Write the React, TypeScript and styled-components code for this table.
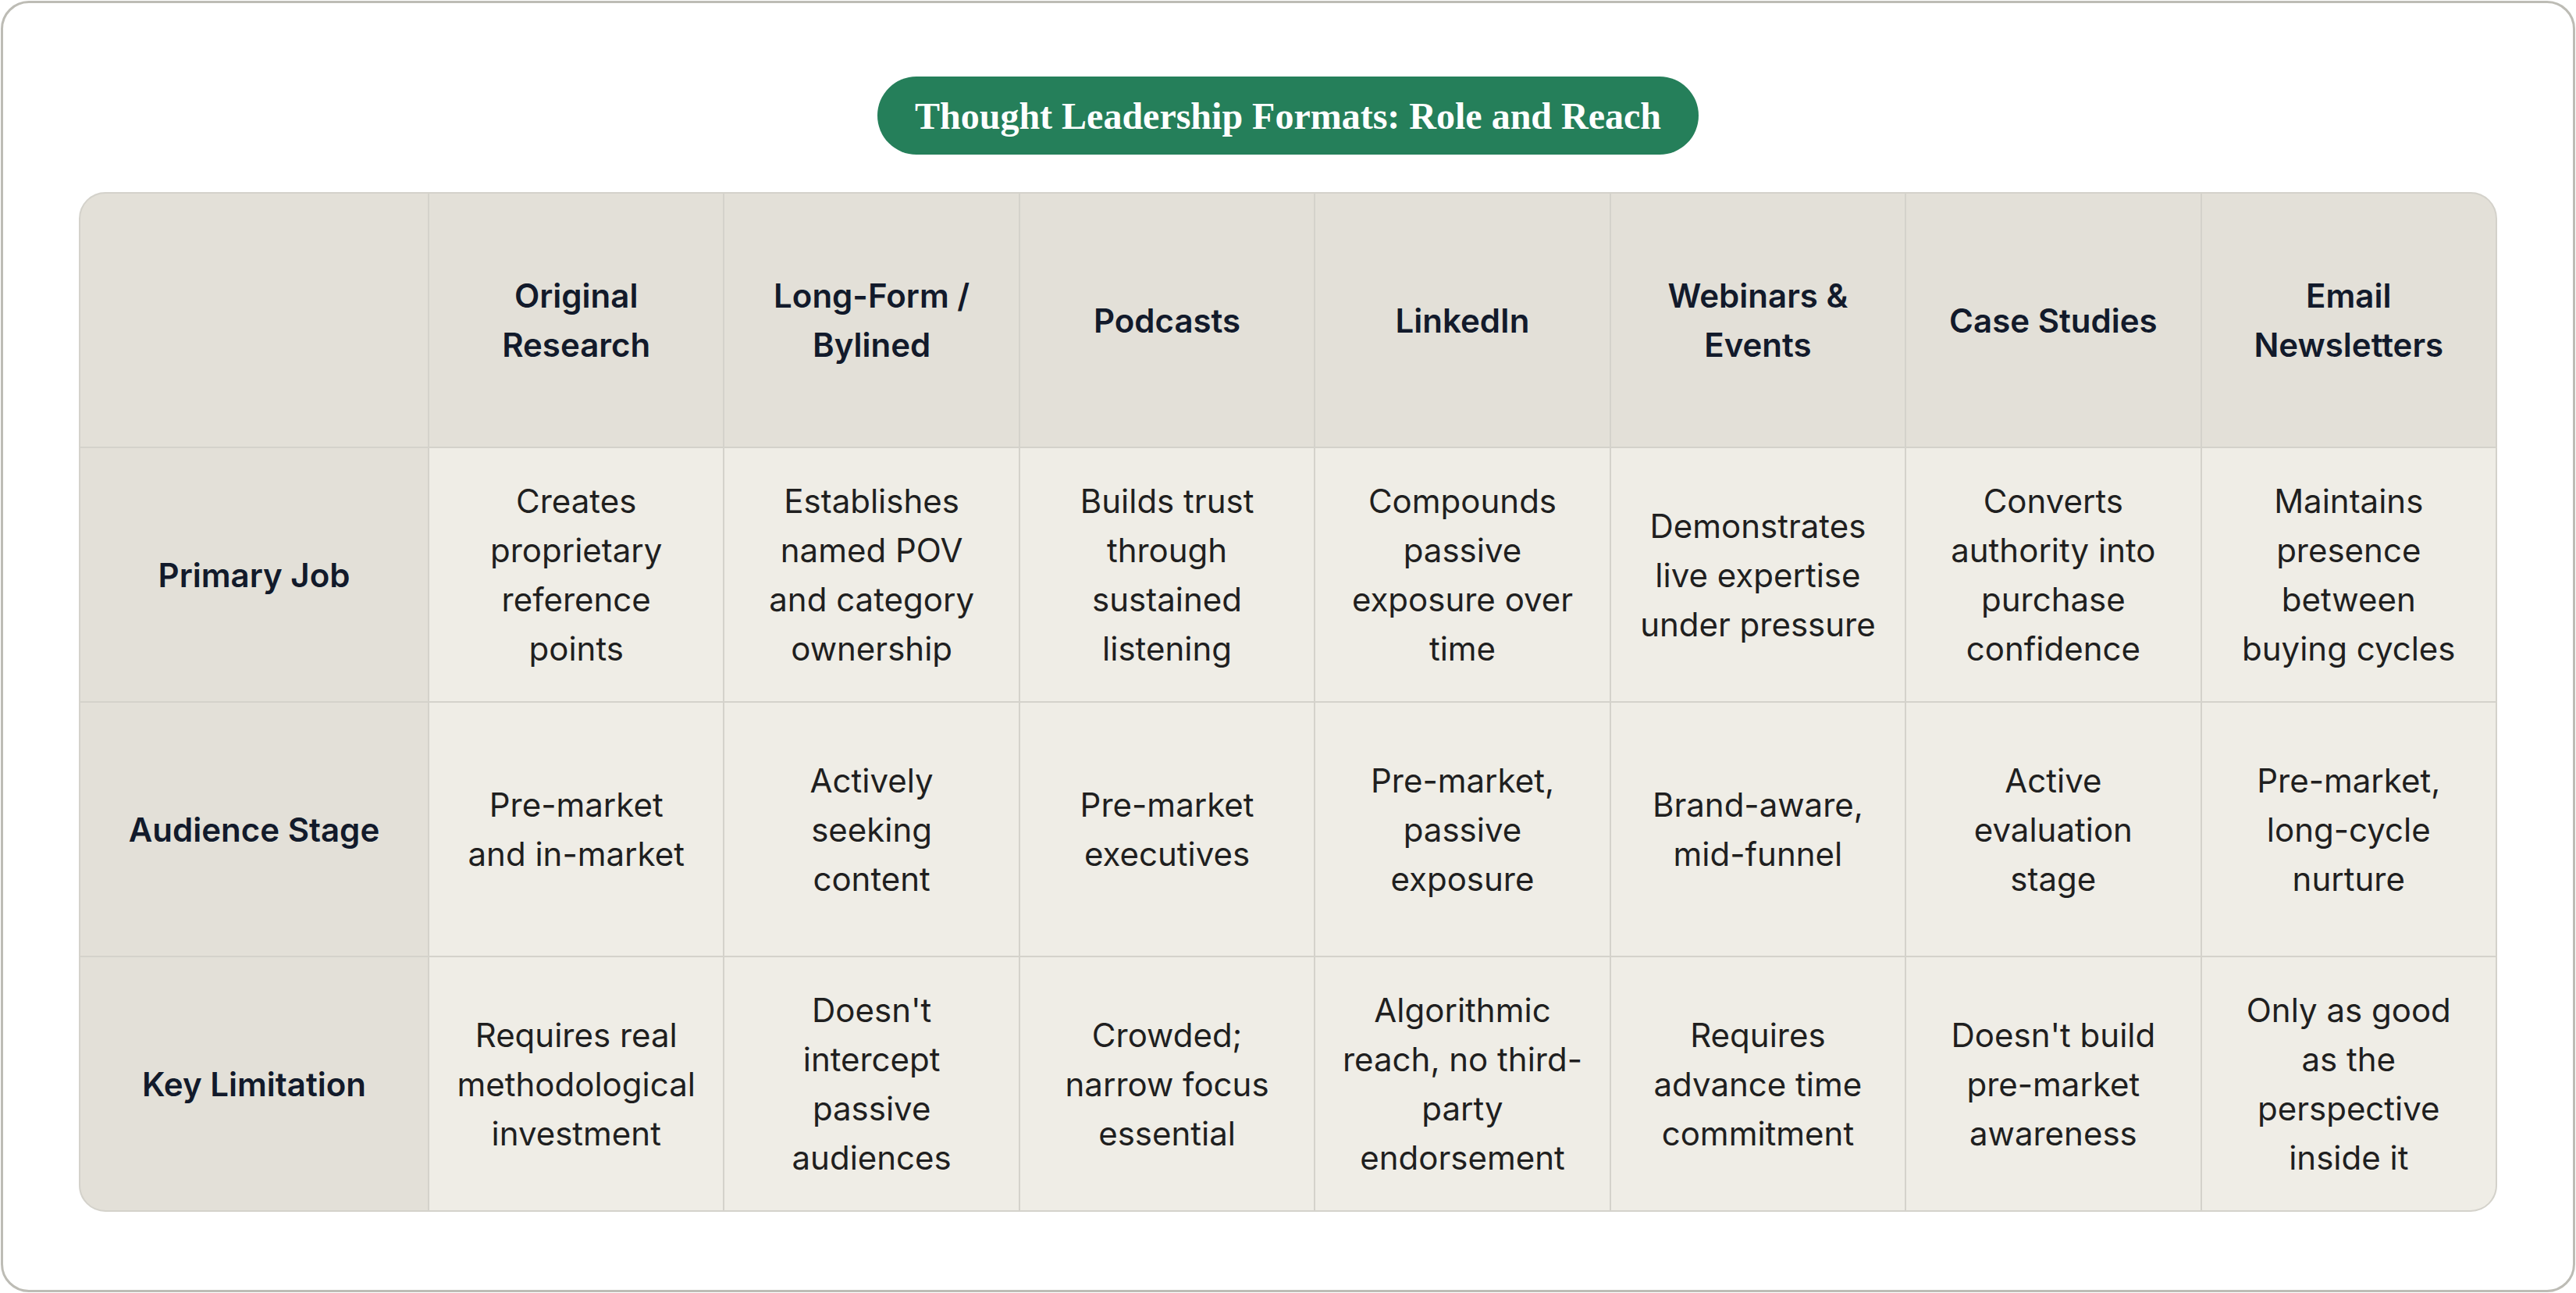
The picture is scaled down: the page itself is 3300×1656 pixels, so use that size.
import styled, { createGlobalStyle } from 'styled-components';

const GlobalStyle = createGlobalStyle`
  html, body {
    margin: 0;
    padding: 0;
    background: #ffffff;
  }
  * {
    box-sizing: border-box;
  }
`;

const Page = styled.div`
  width: 100vw;
  height: 100vh;
  padding: 1px;
`;

const Frame = styled.div`
  width: 100%;
  height: 100%;
  border: 3px solid #bdbcb5;
  border-radius: 36px;
  background: #ffffff;
  padding: 94px 97px 0;
  display: flex;
  flex-direction: column;
  align-items: center;
`;

const TitlePill = styled.h1`
  margin: 0 0 48px;
  height: 100px;
  padding: 0 48px;
  border-radius: 50px;
  background: #257f5a;
  color: #ffffff;
  display: flex;
  align-items: center;
  font-family: 'Liberation Serif', 'Times New Roman', serif;
  font-weight: 700;
  font-size: 48px;
  letter-spacing: 0;
`;

const Table = styled.div`
  width: 100%;
  display: grid;
  grid-template-columns: 445px repeat(7, 1fr);
  grid-auto-rows: 1fr;
  gap: 2px;
  background: #d4d2cb;
  border: 2px solid #d4d2cb;
  border-radius: 34px;
  overflow: hidden;
`;

const Cell = styled.div<{ $head?: boolean; $bold?: boolean }>`
  background: ${({ $head }) => ($head ? '#e3e0d8' : '#efede6')};
  color: ${({ $bold }) => ($bold ? '#121a2b' : '#1f1f1f')};
  font-family: Inter, 'Noto Sans', sans-serif;
  font-size: 42px;
  font-weight: ${({ $bold }) => ($bold ? 600 : 400)};
  line-height: 63px;
  text-align: center;
  white-space: pre-line;
  display: flex;
  align-items: center;
  justify-content: center;
  padding: 36px 16px;
`;

const formats = [
  'Original\nResearch',
  'Long-Form /\nBylined',
  'Podcasts',
  'LinkedIn',
  'Webinars &\nEvents',
  'Case Studies',
  'Email\nNewsletters',
];

const rows = [
  {
    label: 'Primary Job',
    cells: [
      'Creates\nproprietary\nreference\npoints',
      'Establishes\nnamed POV\nand category\nownership',
      'Builds trust\nthrough\nsustained\nlistening',
      'Compounds\npassive\nexposure over\ntime',
      'Demonstrates\nlive expertise\nunder pressure',
      'Converts\nauthority into\npurchase\nconfidence',
      'Maintains\npresence\nbetween\nbuying cycles',
    ],
  },
  {
    label: 'Audience Stage',
    cells: [
      'Pre-market\nand in-market',
      'Actively\nseeking\ncontent',
      'Pre-market\nexecutives',
      'Pre-market,\npassive\nexposure',
      'Brand-aware,\nmid-funnel',
      'Active\nevaluation\nstage',
      'Pre-market,\nlong-cycle\nnurture',
    ],
  },
  {
    label: 'Key Limitation',
    cells: [
      'Requires real\nmethodological\ninvestment',
      "Doesn't\nintercept\npassive\naudiences",
      'Crowded;\nnarrow focus\nessential',
      'Algorithmic\nreach, no third-\nparty\nendorsement',
      'Requires\nadvance time\ncommitment',
      "Doesn't build\npre-market\nawareness",
      'Only as good\nas the\nperspective\ninside it',
    ],
  },
];

export default function App() {
  return (
    <Page>
      <GlobalStyle />
      <Frame>
        <TitlePill>Thought Leadership Formats: Role and Reach</TitlePill>
        <Table>
          <Cell $head />
          {formats.map((f) => (
            <Cell key={f} $head $bold>
              {f}
            </Cell>
          ))}
          {rows.map((row) => [
            <Cell key={row.label} $head $bold>
              {row.label}
            </Cell>,
            ...row.cells.map((c, i) => <Cell key={row.label + i}>{c}</Cell>),
          ])}
        </Table>
      </Frame>
    </Page>
  );
}
